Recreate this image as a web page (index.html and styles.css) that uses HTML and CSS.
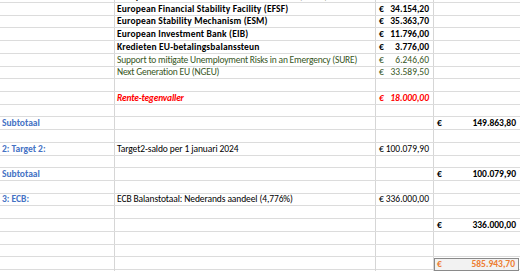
FILE: index.html
```html
<!DOCTYPE html>
<html lang="nl">
<head>
<meta charset="utf-8">
<title>Sheet</title>
<link rel="stylesheet" href="styles.css">
</head>
<body>
<div class="viewport">
  <div class="sheet">
    <div class="row"><div class="c a"></div><div class="c b bold">European Financial Stabilisation Mechanism (EFSM)</div><div class="c m bold"><span>€</span><span>2.711,60</span></div><div class="c d"></div></div>
    <div class="row"><div class="c a"></div><div class="c b bold">European Financial Stability Facility (EFSF)</div><div class="c m bold"><span>€</span><span>34.154,20</span></div><div class="c d"></div></div>
    <div class="row h12"><div class="c a"></div><div class="c b bold">European Stability Mechanism (ESM)</div><div class="c m bold"><span>€</span><span>35.363,70</span></div><div class="c d"></div></div>
    <div class="row"><div class="c a"></div><div class="c b bold">European Investment Bank (EIB)</div><div class="c m bold"><span>€</span><span>11.796,00</span></div><div class="c d"></div></div>
    <div class="row"><div class="c a"></div><div class="c b bold">Kredieten EU-betalingsbalanssteun</div><div class="c m bold"><span>€</span><span>3.776,00</span></div><div class="c d"></div></div>
    <div class="row"><div class="c a"></div><div class="c b green">Support to mitigate Unemployment Risks in an Emergency (SURE)</div><div class="c m green"><span>€</span><span>6.246,60</span></div><div class="c d"></div></div>
    <div class="row h12"><div class="c a"></div><div class="c b green">Next Generation EU (NGEU)</div><div class="c m green"><span>€</span><span>33.589,50</span></div><div class="c d"></div></div>
    <div class="row"><div class="c a"></div><div class="c b"></div><div class="c m"></div><div class="c d"></div></div>
    <div class="row"><div class="c a"></div><div class="c b red">Rente-tegenvaller</div><div class="c m red"><span>€</span><span>18.000,00</span></div><div class="c d"></div></div>
    <div class="row h12"><div class="c a"></div><div class="c b"></div><div class="c m"></div><div class="c d"></div></div>
    <div class="row"><div class="c a label">Subtotaal</div><div class="c b"></div><div class="c m"></div><div class="c d bold"><span>€</span><span>149.863,80</span></div></div>
    <div class="row"><div class="c a"></div><div class="c b"></div><div class="c m"></div><div class="c d"></div></div>
    <div class="row"><div class="c a label">2: Target 2:</div><div class="c b plain">Target2-saldo per 1 januari 2024</div><div class="c m"><span>€</span><span>100.079,90</span></div><div class="c d"></div></div>
    <div class="row h12"><div class="c a"></div><div class="c b"></div><div class="c m"></div><div class="c d"></div></div>
    <div class="row"><div class="c a label">Subtotaal</div><div class="c b"></div><div class="c m"></div><div class="c d bold"><span>€</span><span>100.079,90</span></div></div>
    <div class="row"><div class="c a"></div><div class="c b"></div><div class="c m"></div><div class="c d"></div></div>
    <div class="row h12"><div class="c a label">3: ECB:</div><div class="c b plain">ECB Balanstotaal: Nederands aandeel (4,776%)</div><div class="c m"><span>€</span><span>336.000,00</span></div><div class="c d"></div></div>
    <div class="row"><div class="c a"></div><div class="c b"></div><div class="c m"></div><div class="c d"></div></div>
    <div class="row"><div class="c a"></div><div class="c b"></div><div class="c m"></div><div class="c d bold"><span>€</span><span>336.000,00</span></div></div>
    <div class="row"><div class="c a"></div><div class="c b"></div><div class="c m"></div><div class="c d"></div></div>
    <div class="row h12"><div class="c a"></div><div class="c b"></div><div class="c m"></div><div class="c d"></div></div>
    <div class="row"><div class="c a"></div><div class="c b"></div><div class="c m"></div><div class="c d total"><div class="box"><span>€</span><span>585.943,70</span></div></div></div>
  </div>
</div>
</body>
</html>
```
FILE: styles.css
```css
html, body {
  margin: 0;
  padding: 0;
  background: #ffffff;
}

.viewport {
  width: 520px;
  height: 272px;
  overflow: hidden;
}

.sheet {
  margin-top: -10px;
  font-family: "Carlito", "Lato", "Liberation Sans", sans-serif;
  font-size: 9.5px;
  color: #000000;
}

.row {
  display: grid;
  grid-template-columns: 115px 261px 58px 86px;
  height: 13px;
  box-sizing: border-box;
  border-bottom: 1px solid #dcdcdc;
}

.row.h12 {
  height: 12px;
}

.c {
  box-sizing: border-box;
  border-right: 1px solid #d6d6d6;
  display: flex;
  align-items: flex-end;
  white-space: nowrap;
  line-height: 11px;
  overflow: visible;
}

.a {
  padding-left: 2px;
}

.b {
  padding-left: 2px;
}

.b.bold {
  letter-spacing: 0.15px;
}

.b.green {
  letter-spacing: -0.2px;
}

.b.plain {
  letter-spacing: -0.1px;
}

.m, .d {
  justify-content: space-between;
  padding: 0 4px 0 3px;
}

.d {
  border-right: none;
}

.bold {
  font-weight: 700;
}

.green {
  color: #375623;
}

.red {
  color: #ff0000;
  font-weight: 700;
  font-style: italic;
}

.b.red {
  letter-spacing: -0.2px;
}

.label {
  color: #4472c4;
  font-weight: 700;
}

.total {
  padding: 0;
  align-items: stretch;
}

.box {
  flex: 1;
  display: flex;
  justify-content: space-between;
  align-items: flex-end;
  box-sizing: border-box;
  border: 1px solid #8a8a8a;
  background: #f2f2f2;
  margin: 1px 1px 0 0;
  padding: 0 3px 0 2px;
  color: #ed7d31;
  font-weight: 700;
}
```
